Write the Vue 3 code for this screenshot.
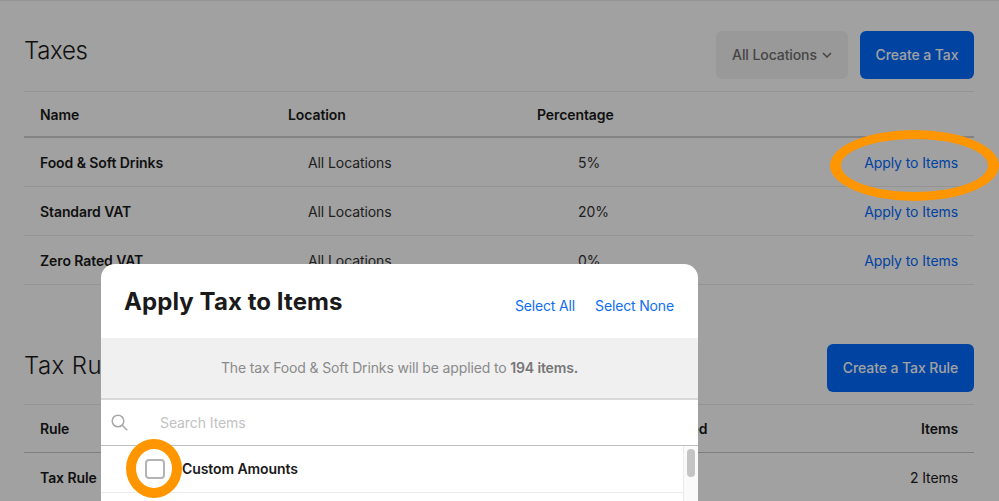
<script setup>
const taxes = [
  { name: 'Food & Soft Drinks', location: 'All Locations', pct: '5%' },
  { name: 'Standard VAT', location: 'All Locations', pct: '20%' },
  { name: 'Zero Rated VAT', location: 'All Locations', pct: '0%' },
]
</script>

<template>
  <div class="screen">
    <main class="page">
      <header class="head first">
        <h2>Taxes</h2>
        <div class="actions">
          <button class="btn ghost">All Locations
            <svg width="10" height="6" viewBox="0 0 10 6"><path d="M1 1l4 4 4-4" fill="none" stroke="currentColor" stroke-width="1.5"/></svg>
          </button>
          <button class="btn primary tax">Create a Tax</button>
        </div>
      </header>
      <div class="row thead tax-grid">
        <span>Name</span><span>Location</span><span>Percentage</span><span></span>
      </div>
      <div v-for="t in taxes" :key="t.name" class="row tax-grid">
        <b>{{ t.name }}</b>
        <span class="loc">{{ t.location }}</span>
        <span class="pct">{{ t.pct }}</span>
        <a class="link">Apply to Items</a>
      </div>

      <header class="head second">
        <h2>Tax Rules</h2>
        <button class="btn primary rule">Create a Tax Rule</button>
      </header>
      <div class="row thead thin rule-grid">
        <span>Rule</span><span class="applied">Applied</span><span class="end">Items</span>
      </div>
      <div class="row rule-grid">
        <b>Tax Rule</b><span></span><span class="end">2 Items</span>
      </div>
    </main>

    <div class="scrim"></div>

    <section class="modal">
      <div class="m-head">
        <h3>Apply Tax to Items</h3>
        <div class="m-links"><a>Select All</a><a>Select None</a></div>
      </div>
      <p class="notice">The tax Food &amp; Soft Drinks will be applied to <strong>194 items.</strong></p>
      <div class="search">
        <svg width="18" height="18" viewBox="0 0 18 18"><circle cx="7" cy="7" r="5.8" fill="none" stroke="#a8a8a8" stroke-width="1.5"/><path d="M11.2 11.2l5 5" stroke="#a8a8a8" stroke-width="1.5" fill="none"/></svg>
        <span>Search Items</span>
      </div>
      <div class="list">
        <div class="rows">
          <div class="item"><i class="check"></i><b>Custom Amounts</b></div>
          <div class="item"></div>
        </div>
        <div class="track"><div class="thumb"></div></div>
      </div>
    </section>

    <div class="ring ring-link"></div>
    <div class="ring ring-check"></div>
  </div>
</template>

<style>
html, body { margin: 0; overflow: hidden; }
</style>

<style scoped>
.screen {
  position: relative;
  width: 999px;
  height: 501px;
  overflow: hidden;
  background: #fff;
  color: #1a1a1a;
  font: 14px/20px Inter, "Noto Sans", sans-serif;
  letter-spacing: -0.09px;
}
.page { padding: 0 25px 0 24px; border-top: 1px solid #ebebeb; }
.head {
  display: flex;
  justify-content: space-between;
  align-items: center;
  border-bottom: 1px solid #ebebeb;
}
.head.first { padding: 30px 0 12px; }
.head.first h2 { top: -4px; }
.head.second { margin-top: 59px; padding-bottom: 12px; }
.head.second h2 { top: -2px; letter-spacing: 0.4px; }
h2 {
  margin: 0;
  font-size: 24px;
  line-height: 32px;
  font-weight: 300;
  letter-spacing: -0.3px;
  position: relative;
}
.actions { display: flex; gap: 12px; }
.btn {
  height: 48px;
  border: 0;
  border-radius: 6px;
  font: 500 14px/20px Inter, "Noto Sans", sans-serif;
  letter-spacing: -0.09px;
  padding: 0;
}
.ghost {
  width: 132px;
  background: #f2f2f2;
  color: #6e6e6e;
  display: flex;
  align-items: center;
  justify-content: center;
  gap: 5px;
}
.primary { background: #006aff; color: #fff; }
.tax { width: 114px; }
.rule { width: 147px; }
.row {
  display: grid;
  align-items: center;
  height: 47px;
  padding-top: 1px;
  border-bottom: 1px solid #ebebeb;
}
.row b { font-weight: 600; padding-left: 16px; }
.thead { height: 43px; border-bottom: 2px solid #d0d0d0; font-weight: 600; }
.thead.thin { height: 46px; border-bottom: 1px solid #c8c8c8; }
.thead span:first-child { padding-left: 16px; }
.tax-grid { grid-template-columns: 264px 249px 1fr 110px; }
.rule-grid { grid-template-columns: 264px 1fr 110px; }
.applied { padding-left: 368px; }
.loc { padding-left: 20px; color: #333; }
.pct { padding-left: 41px; color: #333; }
.link { color: #006aff; text-align: right; padding-right: 16px; white-space: nowrap; }
.end { text-align: right; padding-right: 16px; }
.scrim { position: absolute; inset: 0; background: rgba(0, 0, 0, .37); }
.modal {
  position: absolute;
  left: 101px;
  top: 264px;
  width: 597px;
  height: 300px;
  background: #fff;
  border-radius: 14px 14px 0 0;
  overflow: hidden;
}
.m-head {
  height: 74px;
  padding: 0 24px 0 23px;
  display: flex;
  justify-content: space-between;
  align-items: center;
}
h3 { margin: 0; font-size: 24px; line-height: 32px; font-weight: 700; letter-spacing: 0.08px; position: relative; top: 1px; }
.m-links { display: flex; gap: 20px; color: #0f6ef0; position: relative; top: 5px; letter-spacing: -0.15px; }
.notice {
  margin: 0;
  height: 62px;
  box-sizing: border-box;
  line-height: 60px;
  text-align: center;
  background: #f0f0f0;
  color: #8a8a8a;
  border-bottom: 2px solid #d8d8d8;
  letter-spacing: -0.14px;
}
.notice strong { font-weight: 600; color: #767676; }
.search {
  height: 46px;
  box-sizing: border-box;
  display: flex;
  align-items: center;
  padding-left: 10px;
  color: #c2c2c2;
  border-bottom: 1px solid #c0c0c0;
}
.search span { margin-left: 31px; }
.list { display: flex; }
.rows { flex: 1; }
.item {
  height: 46px;
  border-bottom: 1px solid #ebebeb;
  display: flex;
  align-items: center;
  padding-left: 44px;
}
.check {
  width: 16px;
  height: 16px;
  border: 2px solid #b4b4b4;
  border-radius: 4px;
}
.item b { font-weight: 600; margin-left: 17px; }
.track {
  width: 15px;
  height: 120px;
  background: #fafafa;
  border-left: 1px solid #ebebeb;
  box-sizing: border-box;
  padding: 3px 3px 0 3px;
}
.thumb { width: 8px; height: 28px; border-radius: 4px; background: #c4c4c4; }
.ring { position: absolute; box-sizing: border-box; border: 10px solid #ff9600; border-radius: 50%; }
.ring-link { left: 830px; top: 130px; width: 169px; height: 71px; border-width: 9px 11px; }
.ring-check { left: 126px; top: 439px; width: 56px; height: 59px; }
</style>
